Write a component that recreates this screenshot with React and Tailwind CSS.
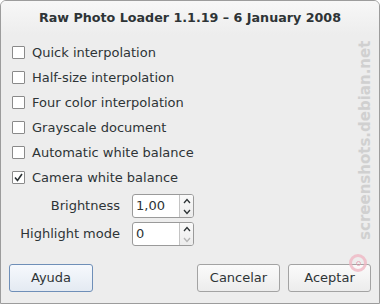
import React from "react";

function Check({ checked, label }) {
  return (
    <div className="flex items-center h-[25px]">
      <div className="w-[13px] h-[13px] border border-[#8a8a8a] bg-white ml-[11px] mr-[7px] flex items-center justify-center rounded-[1px]">
        {checked && (
          <svg width="11" height="11" viewBox="0 0 11 11">
            <path d="M2 5.5 L4.5 8.5 L9 2" fill="none" stroke="#2e3436" strokeWidth="1.6" />
          </svg>
        )}
      </div>
      <span className="text-[13px] text-[#2e3436]">{label}</span>
    </div>
  );
}

function Spin({ value, downDisabled }) {
  return (
    <div className="flex h-[24px] w-[62px] border border-[#9a9a9a] rounded-[3px] bg-white overflow-hidden">
      <div className="flex-1 flex items-center pl-[3px] text-[13px] text-[#2e3436]">{value}</div>
      <div className="w-[14px] border-l border-[#c4c4c4] flex flex-col bg-gradient-to-b from-[#fafafa] to-[#ececec]">
        <div className="flex-1 flex items-center justify-center">
          <svg width="8" height="6" viewBox="0 0 8 6"><path d="M1 5 L4 1.5 L7 5" fill="none" stroke="#2e3436" strokeWidth="1.3" /></svg>
        </div>
        <div className="flex-1 flex items-center justify-center">
          <svg width="8" height="6" viewBox="0 0 8 6"><path d="M1 1 L4 4.5 L7 1" fill="none" stroke={downDisabled ? "#b5b5b5" : "#2e3436"} strokeWidth="1.3" /></svg>
        </div>
      </div>
    </div>
  );
}

export default function App() {
  return (
    <div className="w-[380px] h-[304px] bg-white" style={{ fontFamily: '"DejaVu Sans", sans-serif' }}>
      <div className="relative w-[380px] h-[304px] bg-[#ededed] border border-[#9c9c9c] rounded-t-[6px] overflow-hidden flex flex-col">
        <div className="h-[34px] shrink-0 flex items-center justify-center bg-gradient-to-b from-[#f7f7f7] to-[#ededed]">
          <span className="text-[12.7px] font-bold text-[#2e3436]">Raw Photo Loader 1.1.19 – 6 January 2008</span>
        </div>
        <div className="flex flex-col pt-[5px]">
          <Check label="Quick interpolation" />
          <Check label="Half-size interpolation" />
          <Check label="Four color interpolation" />
          <Check label="Grayscale document" />
          <Check label="Automatic white balance" />
          <Check checked label="Camera white balance" />
        </div>
        <div className="grid grid-cols-[119px_62px] gap-x-[12px] gap-y-[4px] items-center mt-[4px]">
          <span className="text-right text-[13px] text-[#2e3436]">Brightness</span>
          <Spin value="1,00" />
          <span className="text-right text-[13px] text-[#2e3436]">Highlight mode</span>
          <Spin value="0" downDisabled />
        </div>
        <div className="flex items-center mt-[18px] px-[8px]">
          <div className="w-[84px] h-[28px] rounded-[3px] border border-[#6f8fb8] bg-gradient-to-b from-[#f6f9fd] to-[#e4eaf2] flex items-center justify-center text-[13px] text-[#2e3436]">Ayuda</div>
          <div className="flex-1" />
          <div className="w-[83px] h-[28px] rounded-[3px] border border-[#a3a3a3] bg-gradient-to-b from-[#fbfbfb] to-[#ececec] flex items-center justify-center text-[13px] text-[#2e3436]">Cancelar</div>
          <div className="w-[83px] h-[28px] ml-[8px] rounded-[3px] border border-[#a3a3a3] bg-gradient-to-b from-[#fbfbfb] to-[#ececec] flex items-center justify-center text-[13px] text-[#2e3436]">Aceptar</div>
        </div>
        <div className="absolute right-[4px] top-[28px] h-[222px] w-[18px] flex items-center justify-center">
          <span className="whitespace-nowrap -rotate-90 text-[15px] font-bold text-[#cacaca] opacity-80" style={{ fontFamily: '"DejaVu Sans", sans-serif' }}>screenshots.debian.net</span>
        </div>
        <div className="absolute left-[348px] top-[253px] w-[18px] h-[18px] rounded-full border-[3px] border-[#f0b8c4] opacity-80 flex items-center justify-center">
          <div className="w-[5px] h-[5px] rounded-full border border-[#e89aae]" />
        </div>
      </div>
    </div>
  );
}
